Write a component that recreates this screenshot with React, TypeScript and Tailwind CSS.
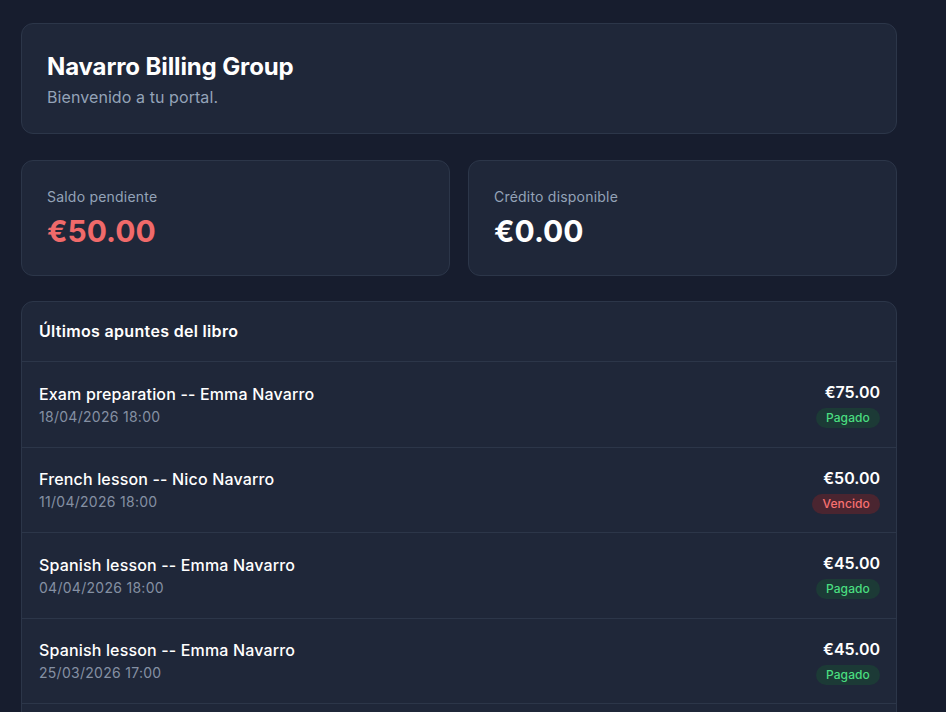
import React from "react";

type Entry = {
  title: string;
  date: string;
  amount: string;
  status: "Pagado" | "Vencido";
};

const entries: Entry[] = [
  { title: "Exam preparation -- Emma Navarro", date: "18/04/2026 18:00", amount: "€75.00", status: "Pagado" },
  { title: "French lesson -- Nico Navarro", date: "11/04/2026 18:00", amount: "€50.00", status: "Vencido" },
  { title: "Spanish lesson -- Emma Navarro", date: "04/04/2026 18:00", amount: "€45.00", status: "Pagado" },
  { title: "Spanish lesson -- Emma Navarro", date: "25/03/2026 17:00", amount: "€45.00", status: "Pagado" },
  { title: "French lesson -- Nico Navarro", date: "18/03/2026 18:00", amount: "€50.00", status: "Pagado" },
];

function StatusBadge({ status }: { status: Entry["status"] }) {
  const paid = status === "Pagado";
  return (
    <span
      className={
        paid
          ? "inline-flex h-5 items-center rounded-full bg-[#1c3a36] px-2.5 text-xs font-medium tracking-[0.01em] text-[#4ade80]"
          : "inline-flex h-5 items-center rounded-full bg-[#4a2530] px-2.5 text-xs font-medium tracking-[0.01em] text-[#f87171]"
      }
    >
      {status}
    </span>
  );
}

function StatCard({ label, value, tone }: { label: string; value: string; tone: "red" | "white" }) {
  return (
    <div className="rounded-xl border border-[#2c3649] bg-[#1f2739] pl-[25px] pr-6 pt-[26px] pb-[26px]">
      <p className="text-sm leading-5 tracking-[0.015em] text-[#94a3b8]">{label}</p>
      <p
        className={
          tone === "red"
            ? "mt-1.5 text-3xl font-bold leading-9 text-[#f06a6a]"
            : "mt-1.5 text-3xl font-bold leading-9 text-white"
        }
      >
        {value}
      </p>
    </div>
  );
}

export default function App() {
  return (
    <div
      className="min-h-screen bg-[#171d2e] text-white"
      style={{ fontFamily: "Inter, 'Noto Sans', 'Liberation Sans', sans-serif" }}
    >
      <div className="ml-[21px] flex w-[876px] flex-col gap-[26px] pt-[23px]">
        <header className="rounded-xl border border-[#2c3649] bg-[#1f2739] pl-[25px] pr-6 pt-[27px] pb-[26px]">
          <h1 className="text-2xl font-bold leading-8 tracking-[-0.005em] text-white">Navarro Billing Group</h1>
          <p className="mt-1 text-base leading-5 tracking-[0.005em] text-[#94a3b8]">Bienvenido a tu portal.</p>
        </header>

        <div className="grid grid-cols-2 gap-[18px]">
          <StatCard label="Saldo pendiente" value="€50.00" tone="red" />
          <StatCard label="Crédito disponible" value="€0.00" tone="white" />
        </div>

        <section className="-mt-px overflow-hidden rounded-xl border border-[#2c3649] bg-[#1f2739]">
          <div className="border-b border-[#2c3649] pl-[17px] pr-4 pt-[17px] pb-[18px]">
            <h2 className="text-base font-semibold leading-6 tracking-[0.02em] text-white">Últimos apuntes del libro</h2>
          </div>
          <ul>
            {entries.map((e, i) => (
              <li
                key={i}
                className="flex items-center justify-between border-b border-[#2c3649] pl-[17px] pr-4 py-[18.25px] last:border-b-0"
              >
                <div>
                  <p className="text-base font-medium leading-6 tracking-[0.01em] text-white">{e.title}</p>
                  <p className="mt-px text-sm leading-5 tracking-[0.02em] text-[#8590a3]">{e.date}</p>
                </div>
                <div className="flex flex-col items-end gap-1">
                  <p className="text-base font-semibold leading-6 text-white">{e.amount}</p>
                  <StatusBadge status={e.status} />
                </div>
              </li>
            ))}
          </ul>
        </section>
      </div>
    </div>
  );
}
